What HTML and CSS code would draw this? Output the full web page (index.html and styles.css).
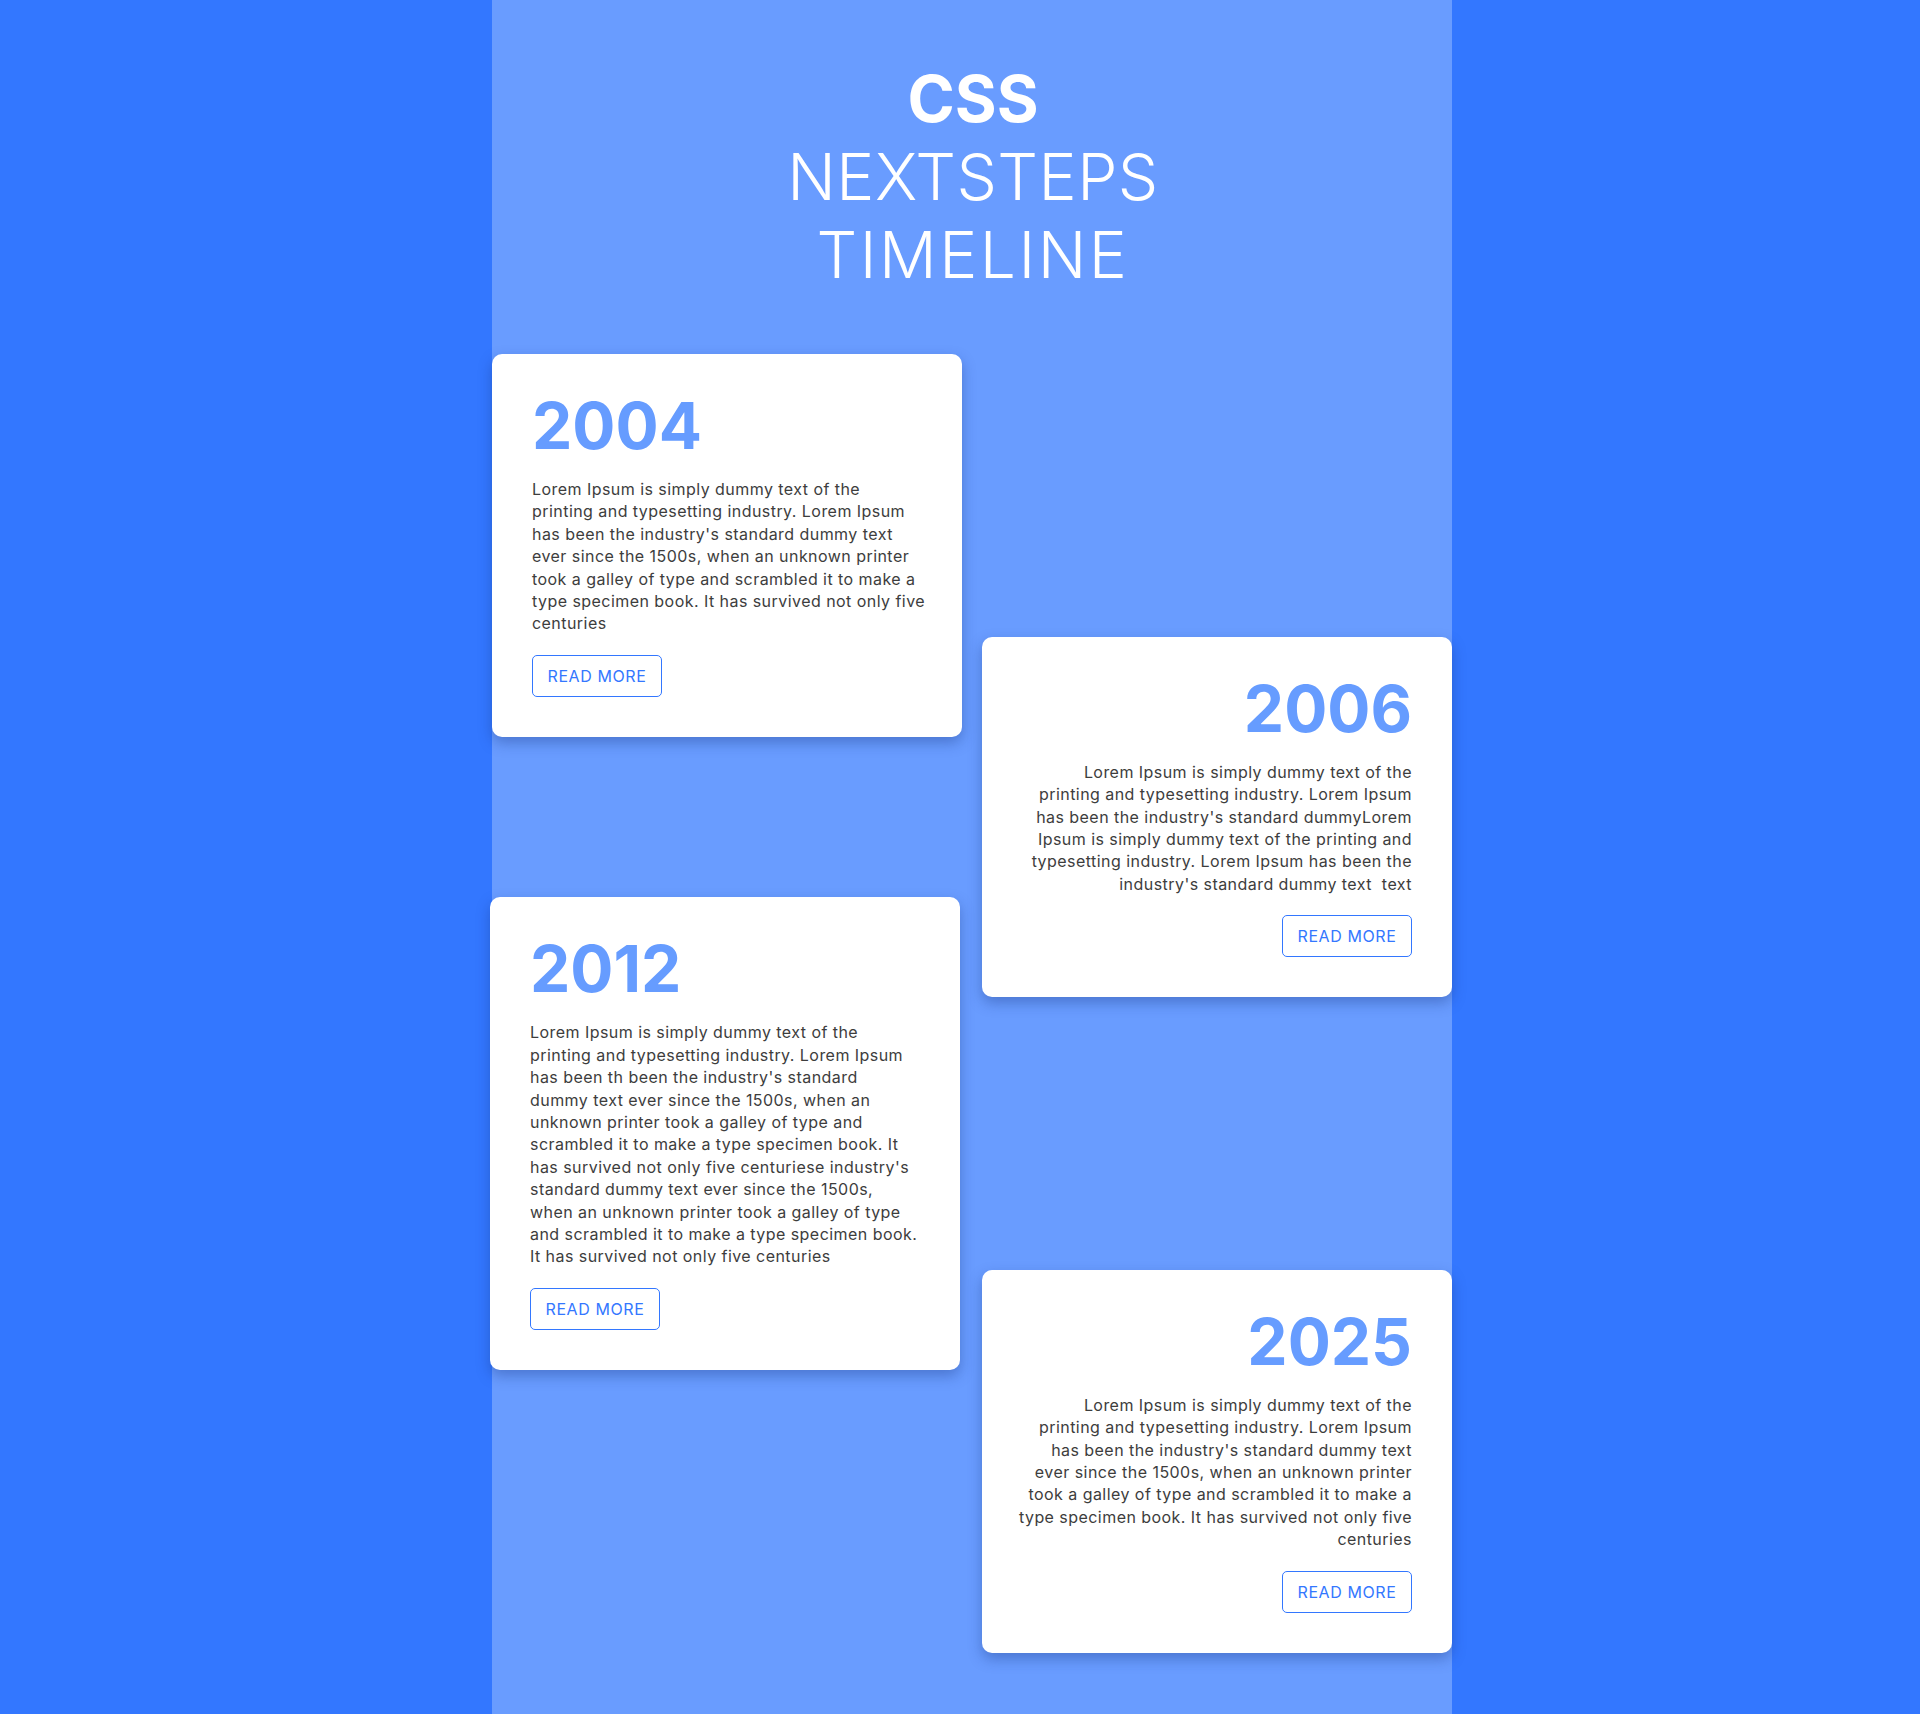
FILE: index.html
```html
<!DOCTYPE html>
<html lang="en">
<head>
<meta charset="utf-8">
<title>CSS Nextsteps Timeline</title>
<link rel="stylesheet" href="styles.css">
</head>
<body>
<main class="page">
  <header class="heading">
    <div class="heading-bold">CSS</div>
    <div class="heading-light">NEXTSTEPS</div>
    <div class="heading-light heading-wide">TIMELINE</div>
  </header>
  <section class="timeline">
    <article class="card card-left">
      <h2 class="year">2004</h2>
      <p class="text">Lorem Ipsum is simply dummy text of the<br>printing and typesetting industry. Lorem Ipsum<br>has been the industry's standard dummy text<br>ever since the 1500s, when an unknown printer<br>took a galley of type and scrambled it to make a<br>type specimen book. It has survived not only five<br>centuries</p>
      <a class="btn" href="#">READ MORE</a>
    </article>
    <article class="card card-right">
      <h2 class="year">2006</h2>
      <p class="text">Lorem Ipsum is simply dummy text of the<br>printing and typesetting industry. Lorem Ipsum<br>has been the industry's standard dummyLorem<br>Ipsum is simply dummy text of the printing and<br>typesetting industry. Lorem Ipsum has been the<br>industry's standard dummy text&nbsp; text</p>
      <a class="btn" href="#">READ MORE</a>
    </article>
    <article class="card card-left card-shift">
      <h2 class="year">2012</h2>
      <p class="text">Lorem Ipsum is simply dummy text of the<br>printing and typesetting industry. Lorem Ipsum<br>has been th been the industry's standard<br>dummy text ever since the 1500s, when an<br>unknown printer took a galley of type and<br>scrambled it to make a type specimen book. It<br>has survived not only five centuriese industry's<br>standard dummy text ever since the 1500s,<br>when an unknown printer took a galley of type<br>and scrambled it to make a type specimen book.<br>It has survived not only five centuries</p>
      <a class="btn" href="#">READ MORE</a>
    </article>
    <article class="card card-right">
      <h2 class="year">2025</h2>
      <p class="text">Lorem Ipsum is simply dummy text of the<br>printing and typesetting industry. Lorem Ipsum<br>has been the industry's standard dummy text<br>ever since the 1500s, when an unknown printer<br>took a galley of type and scrambled it to make a<br>type specimen book. It has survived not only five<br>centuries</p>
      <a class="btn" href="#">READ MORE</a>
    </article>
  </section>
</main>
</body>
</html>
```

FILE: styles.css
```css
html, body {
  margin: 0;
  padding: 0;
}

body {
  background: #3377ff;
  font-family: Inter, "DejaVu Sans", sans-serif;
  min-height: 1714px;
}

.page {
  width: 960px;
  margin-left: calc(50% - 468px);
  background: #699cff;
  min-height: 1714px;
  box-sizing: border-box;
  padding: 60px 0 60px;
}

.heading {
  text-align: center;
  color: #ffffff;
  font-size: 64px;
  line-height: 78px;
  padding-left: 2px;
}

.heading-bold {
  font-weight: 700;
}

.heading-light {
  font-weight: 300;
  letter-spacing: 0.5px;
}

.heading-wide {
  letter-spacing: 2.5px;
}

.timeline {
  margin-top: 60px;
  display: flex;
  flex-direction: column;
}

.card {
  width: 470px;
  box-sizing: border-box;
  padding: 40px;
  background: #ffffff;
  border-radius: 10px;
  box-shadow: 0 6px 14px rgba(20, 50, 120, 0.35);
  display: flex;
  flex-direction: column;
}

.card + .card {
  margin-top: -100px;
}

.card-left {
  align-self: flex-start;
  align-items: flex-start;
  text-align: left;
}

.card-right {
  align-self: flex-end;
  align-items: flex-end;
  text-align: right;
}

.card-shift {
  margin-left: -2px;
}

.year {
  margin: 0 0 20px;
  font-size: 64px;
  line-height: 64px;
  font-weight: 700;
  color: #669cff;
  letter-spacing: 0;
}

.text {
  margin: 0 0 20px;
  font-size: 16px;
  line-height: 22.4px;
  color: #3d3d3d;
  letter-spacing: 0.45px;
  white-space: nowrap;
}

.btn {
  display: inline-flex;
  align-items: center;
  justify-content: center;
  box-sizing: border-box;
  width: 130px;
  height: 42px;
  border: 1px solid #3377ff;
  border-radius: 5px;
  color: #3377ff;
  font-size: 16px;
  letter-spacing: 0.6px;
  text-decoration: none;
}
```
